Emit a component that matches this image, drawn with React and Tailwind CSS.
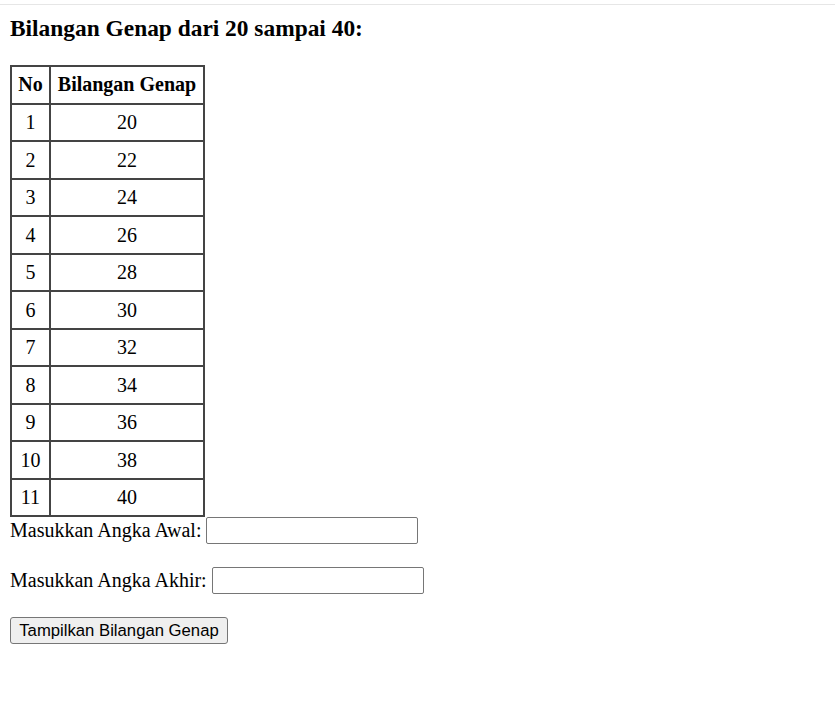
import React from "react";

const rows = [20, 22, 24, 26, 28, 30, 32, 34, 36, 38, 40];

const EvenNumbers = () => {
    return (
        <div className="min-h-screen bg-white text-black font-['Liberation_Serif',serif]">
            <div className="pt-[4px]">
                <div className="h-px bg-[#e6e6e6]" />
            </div>
            <div className="pl-[10px]">
                <h3 className="mt-[9.7px] text-[23.4px] font-bold leading-[26.9px]">
                    Bilangan Genap dari 20 sampai 40:
                </h3>

                <table className="mt-[23.4px] border-collapse border-2 border-[#444] text-[20px] leading-[23px]">
                    <thead>
                        <tr className="h-[38px]">
                            <th className="w-[39px] border-2 border-[#444] p-0 text-center font-bold">No</th>
                            <th className="w-[154px] border-2 border-[#444] p-0 text-center font-bold">Bilangan Genap</th>
                        </tr>
                    </thead>
                    <tbody>
                        {rows.map((n, i) => (
                            <tr key={n} className="h-[37.5px]">
                                <td className="border-2 border-[#444] p-0 text-center">{i + 1}</td>
                                <td className="border-2 border-[#444] p-0 text-center">{n}</td>
                            </tr>
                        ))}
                    </tbody>
                </table>

                <div className="flex flex-col items-start gap-[23px] text-[20px] leading-[23px]">
                    <div className="flex h-[27px] items-center">
                        <label>Masukkan Angka Awal:</label>
                        <input
                            type="text"
                            className="ml-[5px] h-[27px] w-[212px] rounded-[2px] border border-[#767676] bg-white px-1 text-[16px]"
                        />
                    </div>
                    <div className="flex h-[27px] items-center">
                        <label>Masukkan Angka Akhir:</label>
                        <input
                            type="text"
                            className="ml-[5px] h-[27px] w-[212px] rounded-[2px] border border-[#767676] bg-white px-1 text-[16px]"
                        />
                    </div>
                    <button
                        type="button"
                        className="flex h-[27px] w-[218px] items-center justify-center rounded-[3px] border border-[#767676] bg-[#efefef] font-['Liberation_Sans',sans-serif] text-[16.7px] leading-[19px] text-black"
                    >
                        Tampilkan Bilangan Genap
                    </button>
                </div>
            </div>
        </div>
    );
};

export default EvenNumbers;
